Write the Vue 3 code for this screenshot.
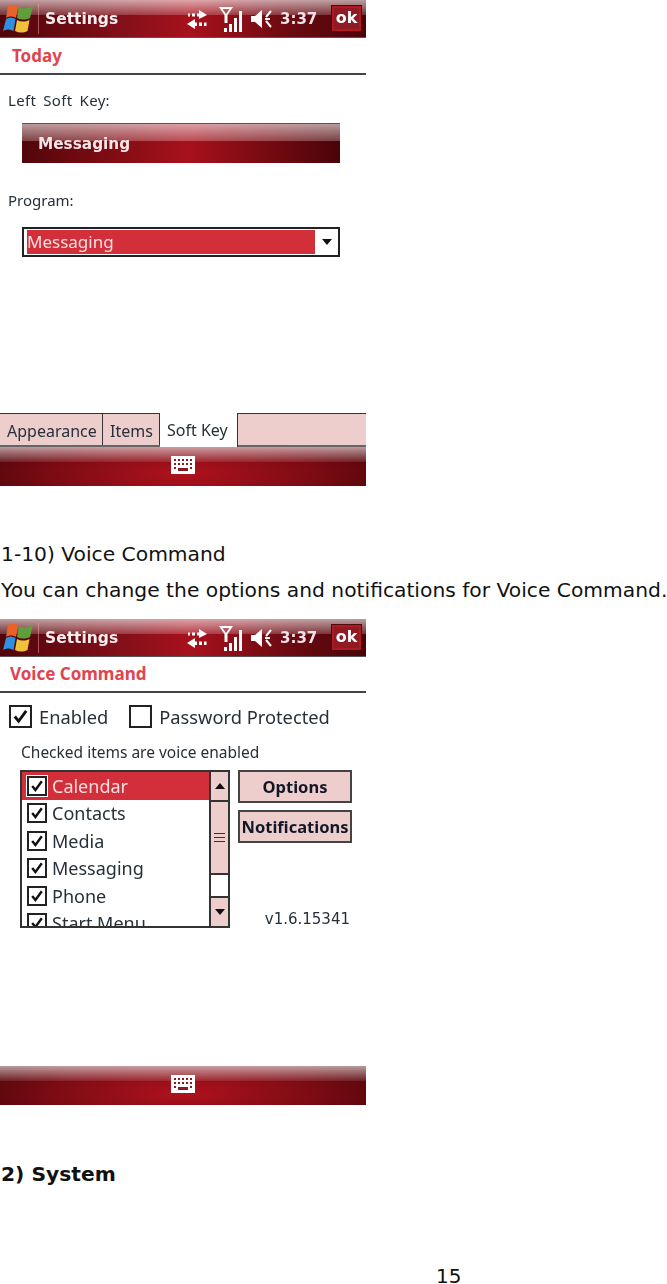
<script setup>
const listItems = ['Calendar', 'Contacts', 'Media', 'Messaging', 'Phone', 'Start Menu']
const softKeyTabs = ['Appearance', 'Items', 'Soft Key']
</script>

<template>
  <svg class="defs" width="0" height="0" aria-hidden="true">
    <symbol id="winLogo" viewBox="0 0 30 28">
      <path d="M5 1 C8 -1 12 -1 15 1 L13 13 C10 11 6 11 3 13 Z" fill="#e8622a" />
      <path d="M16 2 C19 4 23 4 30 1 L27 13 C22 15 18 15 14 13 Z" fill="#5f9e3a" />
      <path d="M3 14 C6 12 9 12 12.500 14 L10.500 26 C7 24 4 24 0 26 Z" fill="#2f8fe0" />
      <path d="M14 15 C18 17 22 17 26.500 15 L24.500 26 C20 28 16 28 12 26 Z" fill="#f0c23a" />
    </symbol>
    <symbol id="syncIcon" viewBox="0 0 22 22">
      <path d="M13 2 L21 7 L13 11 V8.500 H11 V5.500 H13 Z M2 5.500 H4 V8.500 H2 Z M6 5.500 H9 V8.500 H6 Z" fill="#fff" />
      <path d="M9 11 L1 16 L9 21 V18 H11 V14.500 H9 Z M13 14.500 H16 V18 H13 Z M18 14.500 H20.500 V18 H18 Z" fill="#fff" />
    </symbol>
    <symbol id="signalIcon" viewBox="0 0 25 28">
      <path d="M1 2 H15 L9.500 10 V18 H6.500 V10 Z M4.500 4 L8 9 L11.500 4 Z" fill="#fff" fill-rule="evenodd" />
      <rect x="6" y="23" width="3" height="4" fill="#fff" />
      <rect x="11" y="19" width="3" height="8" fill="#fff" />
      <rect x="16" y="13" width="3" height="14" fill="#fff" />
      <rect x="21" y="6" width="3" height="21" fill="#fff" />
    </symbol>
    <symbol id="speakerIcon" viewBox="0 0 23 22">
      <path d="M1 8 H5 L12 2 V20 L5 14 H1 Z" fill="#fff" />
      <path d="M21 3 L16 9 M15 11 H20 M16 13 L21 19" stroke="#fff" stroke-width="2" fill="none" />
    </symbol>
    <symbol id="keyboardIcon" viewBox="0 0 24 18">
      <rect width="24" height="18" fill="#fff" />
      <path d="M3 3 h2 v2 h-2 z M7 3 h2 v2 h-2 z M11 3 h2 v2 h-2 z M15 3 h2 v2 h-2 z M19 3 h2 v2 h-2 z M3 7 h2 v2 h-2 z M7 7 h2 v2 h-2 z M11 7 h2 v2 h-2 z M15 7 h2 v2 h-2 z M19 7 h2 v2 h-2 z M3 11 h2 v2 h-2 z M19 11 h2 v2 h-2 z M7 12 h10 v3 h-10 z" fill="#8a1a22" />
    </symbol>
    <symbol id="tick" viewBox="0 0 20 20">
      <path d="M4 10 L8 15 L16 4" stroke="#111" stroke-width="3" fill="none" />
    </symbol>
  </svg>

  <div class="page">
    <section class="screen">
      <header class="titlebar">
        <svg class="logo"><use href="#winLogo" /></svg>
        <span class="titlebar-sep"></span>
        <span class="app-name">Settings</span>
        <svg class="ic-sync"><use href="#syncIcon" /></svg>
        <svg class="ic-signal"><use href="#signalIcon" /></svg>
        <svg class="ic-speaker"><use href="#speakerIcon" /></svg>
        <span class="clock">3:37</span>
        <span class="ok-btn">ok</span>
      </header>
      <div class="screen-head">Today</div>
      <div class="softkey-body">
        <div class="field-label wide">Left Soft Key:</div>
        <div class="preview">Messaging</div>
        <div class="field-label program-label">Program:</div>
        <div class="select">
          <span class="select-value">Messaging</span>
          <span class="select-arrow"></span>
        </div>
      </div>
      <div class="tabs">
        <span
          v-for="tab in softKeyTabs"
          :key="tab"
          class="tab"
          :class="{ active: tab === 'Soft Key' }"
        >{{ tab }}</span>
        <span class="tab-rest"></span>
      </div>
      <footer class="softbar">
        <svg class="ic-keyboard"><use href="#keyboardIcon" /></svg>
      </footer>
    </section>

    <p class="doc-text first">1-10) Voice Command</p>
    <p class="doc-text">You can change the options and notifications for Voice Command.</p>

    <section class="screen second">
      <header class="titlebar">
        <svg class="logo"><use href="#winLogo" /></svg>
        <span class="titlebar-sep"></span>
        <span class="app-name">Settings</span>
        <svg class="ic-sync"><use href="#syncIcon" /></svg>
        <svg class="ic-signal"><use href="#signalIcon" /></svg>
        <svg class="ic-speaker"><use href="#speakerIcon" /></svg>
        <span class="clock">3:37</span>
        <span class="ok-btn">ok</span>
      </header>
      <div class="screen-head voice">Voice Command</div>
      <div class="voice-body">
        <div class="check-row">
          <span class="box big"><svg><use href="#tick" /></svg></span>
          <span class="check-label">Enabled</span>
          <span class="box big second-box"></span>
          <span class="check-label">Password Protected</span>
        </div>
        <div class="hint">Checked items are voice enabled</div>
        <div class="voice-main">
          <div class="list">
            <div class="list-rows">
              <div
                v-for="(item, i) in listItems"
                :key="item"
                class="list-row"
                :class="{ selected: i === 0 }"
              >
                <span class="box"><svg><use href="#tick" /></svg></span>
                <span>{{ item }}</span>
              </div>
            </div>
            <div class="scroll">
              <span class="scroll-btn"><i class="tri up"></i></span>
              <span class="scroll-thumb"><i class="grip"></i></span>
              <span class="scroll-track"></span>
              <span class="scroll-btn down"><i class="tri dn"></i></span>
            </div>
          </div>
          <div class="side">
            <span class="side-btn">Options</span>
            <span class="side-btn">Notifications</span>
            <span class="version">v1.6.15341</span>
          </div>
        </div>
      </div>
      <footer class="softbar">
        <svg class="ic-keyboard"><use href="#keyboardIcon" /></svg>
      </footer>
    </section>

    <p class="doc-text system">2) System</p>
    <p class="page-no">15</p>
  </div>
</template>

<style>
html, body { background: #fff; }
</style>

<style scoped>
.defs { position: absolute; }

.page {
  width: 667px;
  height: 1284px;
  overflow: hidden;
  background: #fff;
  font-family: "DejaVu Sans", sans-serif;
  color: #111;
}

.screen {
  width: 366px;
  height: 486px;
  display: flex;
  flex-direction: column;
  font-family: "Noto Sans", "Liberation Sans", sans-serif;
  color: #26303a;
}
.second { margin-top: 11px; }

.titlebar {
  height: 37px;
  flex: none;
  display: flex;
  align-items: center;
  border-bottom: 1px solid #555;
  background:
    linear-gradient(to bottom, rgba(255, 255, 255, .62), rgba(255, 255, 255, .18) 41%, rgba(255, 255, 255, 0) 41%),
    linear-gradient(to right, #4f0509, #86101a 35%, #a8111c 52%, #6d0a12 78%, #4a0408);
  filter: blur(.3px);
}
.logo { width: 30px; height: 28px; margin-left: 3px; flex: none; }
.titlebar-sep { width: 1px; height: 30px; margin-left: 5px; background: rgba(255, 180, 180, .45); }
.app-name {
  margin-left: 6px;
  width: 141px;
  font: bold 15.500px "DejaVu Sans", sans-serif;
  color: #f6eef0;
}
.ic-sync { width: 22px; height: 22px; flex: none; }
.ic-signal { width: 25px; height: 28px; margin-left: 10px; flex: none; }
.ic-speaker { width: 23px; height: 22px; margin-left: 7px; flex: none; }
.clock {
  margin-left: 7px;
  width: 52px;
  font: bold 15px "DejaVu Sans", sans-serif;
  color: #eee3e8;
}
.ok-btn {
  width: 29px;
  height: 25px;
  box-sizing: border-box;
  border: 2px solid #b01822;
  outline: 1px solid #4a0a0e;
  background: #8f1a24;
  color: #fff;
  font: bold 16px/20px "DejaVu Sans", sans-serif;
  text-align: center;
}

.screen-head {
  height: 37px;
  flex: none;
  box-sizing: border-box;
  padding: 7px 0 0 12px;
  border-bottom: 2px solid #444;
  font: bold 17px/22px "Noto Sans", sans-serif;
  color: #e0444e;
}
.screen-head.voice { height: 36px; padding: 6px 0 0 10px; }

.softkey-body {
  flex: 1;
  padding: 14px 26px 0 22px;
  filter: blur(.3px);
}
.field-label { margin-left: -14px; font-size: 15px; line-height: 22px; }
.field-label.wide { word-spacing: 3px; letter-spacing: .3px; }
.program-label { margin-top: 26px; }
.preview {
  margin-top: 12px;
  height: 40px;
  box-sizing: border-box;
  padding-left: 16px;
  border-top: 1px solid #555;
  font: bold 15.300px/40px "DejaVu Sans", sans-serif;
  color: #f2e6e8;
  background:
    linear-gradient(to bottom, rgba(255, 255, 255, .6), rgba(255, 255, 255, .25) 43%, rgba(255, 255, 255, 0) 43%),
    linear-gradient(to right, #52060a, #a8111c 52%, #4a0408);
}
.select {
  margin-top: 16px;
  height: 30px;
  box-sizing: border-box;
  border: 2px solid #222;
  padding: 1px 0 1px 3px;
  display: flex;
  align-items: stretch;
}
.select-value {
  width: 288px;
  background: #d32f3a;
  color: #f8dfe0;
  font-size: 17px;
  line-height: 23px;
}
.select-arrow {
  margin: 9px 0 0 7px;
  border: 5px solid transparent;
  border-top: 6px solid #111;
  border-bottom: 0;
  width: 0;
  height: 0;
}

.tabs {
  height: 34px;
  flex: none;
  display: flex;
  font-size: 16px;
  border-bottom: 2px solid #666;
  box-sizing: border-box;
  filter: blur(.25px);
}
.tab {
  box-sizing: border-box;
  padding: 0 7px;
  line-height: 35px;
  background: #eecdcd;
  border-top: 1px solid #333;
  border-right: 1px solid #333;
  white-space: nowrap;
}
.tab:nth-child(1) { width: 103px; }
.tab:nth-child(2) { width: 57px; }
.tab.active {
  width: 78px;
  padding: 0 7px;
  background: #fff;
  border-top: 0;
  margin-bottom: -2px;
  position: relative;
}
.tab-rest { flex: 1; background: #eecdcd; border-top: 1px solid #333; }

.softbar {
  height: 39px;
  flex: none;
  display: flex;
  align-items: center;
  justify-content: center;
  background:
    linear-gradient(to bottom, rgba(255, 255, 255, .6), rgba(255, 255, 255, .1) 38%, rgba(255, 255, 255, 0) 38%),
    radial-gradient(ellipse 60% 120% at 50% 70%, #b0121d, #7c0b14 60%, #4f0609);
}
.ic-keyboard { width: 24px; height: 18px; margin-top: -4px; }

.voice-body {
  flex: 1;
  padding-top: 12px;
  filter: blur(.3px);
}
.check-row { display: flex; align-items: center; padding-left: 9px; font-size: 18.300px; height: 23px; }
.box {
  width: 20px;
  height: 20px;
  flex: none;
  box-sizing: border-box;
  border: 2px solid #222;
  background: #fff;
  display: flex;
}
.box svg { width: 100%; height: 100%; }
.box.big { width: 23px; height: 23px; }
.second-box { margin-left: 21px; }
.check-label { margin-left: 7px; }

.hint { margin: 13px 0 0 21px; font-size: 15.500px; line-height: 22px; }

.voice-main { display: flex; margin: 7px 0 0 20px; }
.list {
  width: 210px;
  height: 158px;
  box-sizing: border-box;
  border: 2px solid #333;
  display: flex;
  overflow: hidden;
}
.list-rows { flex: 1; overflow: hidden; }
.list-row {
  height: 27.500px;
  display: flex;
  align-items: center;
  gap: 5px;
  padding-left: 5px;
  font-size: 18px;
}
.list-row.selected { background: #d32f3a; color: #f8dfe0; }
.list-row.selected .box { outline: 1px solid #fff; }

.scroll {
  width: 17px;
  flex: none;
  border-left: 2px solid #333;
  display: flex;
  flex-direction: column;
}
.scroll-btn {
  height: 28px;
  flex: none;
  background: #eecdcd;
  border-bottom: 2px solid #333;
  display: flex;
  align-items: center;
  justify-content: center;
}
.scroll-btn.down { border-bottom: 0; border-top: 2px solid #333; }
.scroll-thumb {
  height: 71px;
  flex: none;
  background: #eecdcd;
  display: flex;
  align-items: center;
  justify-content: center;
}
.scroll-track { flex: 1; background: #fff; border-top: 2px solid #333; }
.grip { width: 11px; height: 7px; border-top: 1px solid #333; border-bottom: 1px solid #333; }
.grip::after { content: ""; display: block; height: 1px; margin-top: 3px; background: #333; }
.tri { width: 0; height: 0; border: 5px solid transparent; }
.tri.up { border-top: 0; border-bottom: 6px solid #111; }
.tri.dn { border-bottom: 0; border-top: 6px solid #111; }

.side {
  flex: 1;
  margin: 0 14px 0 8px;
  display: flex;
  flex-direction: column;
  gap: 7px;
}
.side-btn {
  height: 33px;
  box-sizing: border-box;
  border: 2px solid #444;
  background: #eecdcd;
  text-align: center;
  font-size: 16.500px;
  font-weight: 700;
  line-height: 29px;
  color: #101828;
}
.version {
  margin-top: auto;
  text-align: right;
  padding-right: 2px;
  font: 15px/18px "DejaVu Sans", sans-serif;
}

.doc-text {
  margin: 0;
  padding-left: 1px;
  font-size: 20.250px;
  line-height: 36px;
  white-space: nowrap;
}
.doc-text.first { margin-top: 50px; }
.doc-text.system { margin-top: 51px; font-weight: 700; }
.page-no {
  margin: 74px 0 0;
  padding-left: 436px;
  font-size: 20px;
  line-height: 20px;
}
</style>
